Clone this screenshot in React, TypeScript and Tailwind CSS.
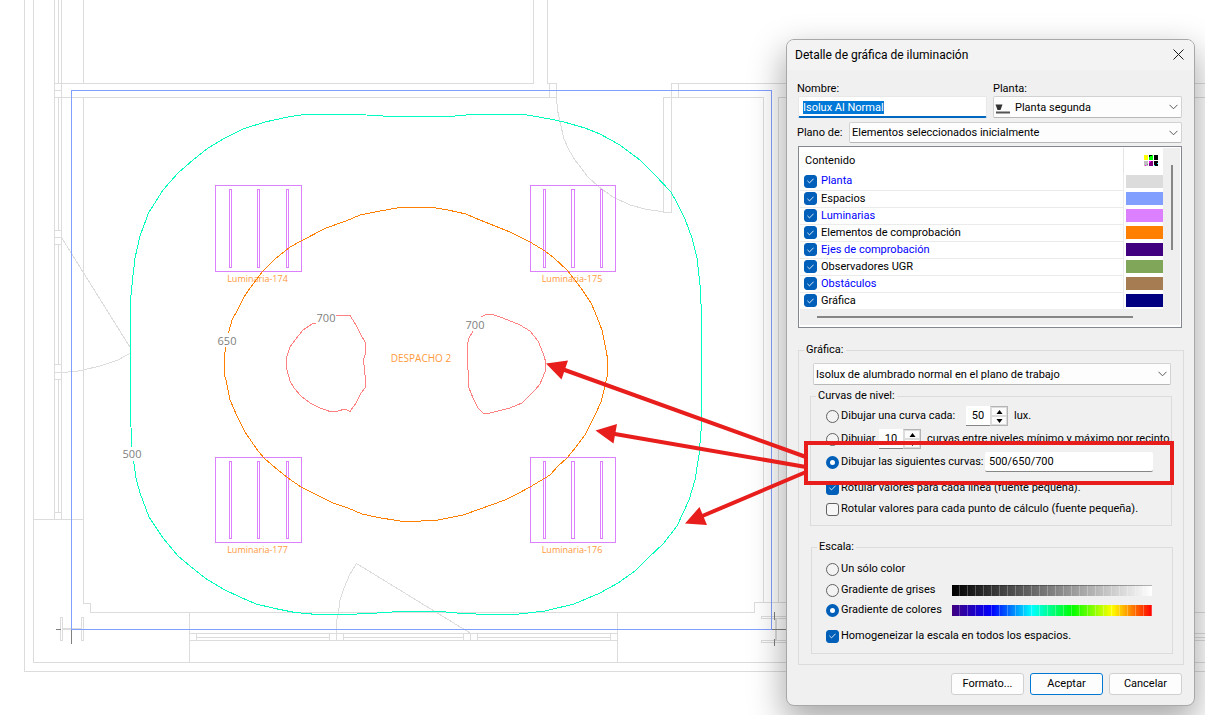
import React, { useEffect, useId, useRef } from "react";

const FONT = "font-['Roboto','Noto_Sans',sans-serif]";

/* ---------- floor plan ---------- */

const WALLS = [
  "M24.5 0V671.5H1205",
  "M33.5 0V662.5H1205",
  "M33.5 519.5H83.5",
  "M54.5 0V519.5",
  "M61.5 0V519.5",
  "M58.5 0V83.5M58.5 97.5V230.5M58.5 244.5V364.5M58.5 379.5V512.5",
  "M54.5 90.5H61.5M54.5 230.5H61.5M54.5 237.5H61.5M54.5 244.5H61.5M54.5 364.5H61.5M54.5 372.5H61.5M54.5 379.5H61.5M54.5 512.5H61.5",
  "M83.5 0V83.5M83.5 97.5V603.5H90.5V612.5H754.5V602.5H790",
  "M54.5 83.5H533.5V0",
  "M547.5 0V83.5H556.5V97.5",
  "M549.5 83.5V97.5",
  "M54.5 97.5H556.5",
  "M671.5 212.5V83.5H1205",
  "M678.5 83.5V97.5",
  "M671.5 212.5H663.5V97.5H763.5V602.5",
  "M778.5 602.5V97.5H1205",
  "M189.5 612.5V662.5M617.5 612.5V662.5",
  "M189.5 633.5H617.5M189.5 640.5H617.5",
  "M196.5 633.5V640.5M329.5 633.5V640.5M343.5 633.5V640.5M463.5 633.5V640.5M470.5 633.5V640.5M477.5 633.5V640.5M610.5 633.5V640.5",
  "M196.5 637.5H329.5M343.5 637.5H463.5M477.5 637.5H610.5",
  "M1190 612.5H1205M1190 633.5H1205M1190 637.5H1205M1190 640.5H1205",
  "M60.5 617.5H62.5V640.5H60.5ZM81.5 617.5H83.5V640.5H81.5Z",
  "M790 616.5H761.5V618.5H790M790 640.5H761.5V642.5H790",
];

const DOORS = [
  "M556.5 97L557.5 110L560 122L564 139L569 150L575 160L588 177L599 187L613 197L630 205L645 209L664 212",
  "M61.5 237.5L130.5 348V353L118 360L100 366L83 370L75 371.5L61.5 372.5",
  "M336.5 640V622L338.5 612L340 600L344 588L350 574L356.5 563.5L470 633",
];

const ISO_500 =
  "M131.5 447L131 427L130.5 415V300L132.5 280L135 258L140 236L148.5 213L163 190L178 173L193 160L208 148L225 138L243 129L265 122L290 116.5L305 114.5H358L383 116L400 116.5H450L472 114.5H523L530 115.5L550 119L564 122L585 128L600 134L620 145L640 160L655 175L671 192L677 203L685 219L692 238L697 258L700 285L701.5 313V425L699 455L695 480L689 500L677 526L663 544L648 558L635 571L618 583L600 593L574 604L545 611L515 614.5H488L463 613.5L440 611.5H400L370 613.5L345 614.5H317L295 612.5L275 608.5L256 604L240 597L223 589L205 578L190 566L178 556L163 538L149 517L140 493L136 478L133.5 461";
const ISO_650 =
  "M228.5 333L232 320L237 311L244 297L250 288L257 279L263 271L275 259L290 247L301 241L326 228L346 221L360 215L380 211L400 207.5H433L448 210L466 214L475 218L495 226L510 232L530 242L545 251L553 257L567 270L581 288L591 303L595 312L602 330L605 345L607.5 358V375L604 390L601 402L596 413L590 425L585 435L576 447L567 458L558 466L550 475L530 487L517 494L505 500L480 509L463 515L438 520L413 521.5L400 521L378 517.5L362 514L348 508L333 503L315 494L301 487L288 478L278 470L265 459L258 451L245 432L237 416L230 400L226 380L224.5 375V357L225.5 347";
const ISO_700 =
  "M336 315.5H350L356 325L360 333L366 344L365 355L363.5 360L365 375V388L361 393L356 403L350 411.5L345 409L338 411L330 411.5L320 408L310 403L301 396L294 388L290 381L287 370L286.5 358L290 347L295 340L303 330L312 324L316 323M481 317L485 315L491 314L500 317L508 320L520 325L530 331L538 341L541 348L544 356L546 363L545 372L540 384L535 390L522 403L510 408L490 413L483 413L478 408L473 398L469 388L468 370L467 350V346L469 338L473 331";

const LUMINAIRES = [
  { name: "Luminaria-174", x: 215.5, y: 185.5, w: 86, h: 86, slats: [14, 42, 71], tall: 78 },
  { name: "Luminaria-175", x: 530.5, y: 185.5, w: 85, h: 86, slats: [13, 41, 70], tall: 78 },
  { name: "Luminaria-177", x: 215.5, y: 457.5, w: 86, h: 85, slats: [14, 42, 71], tall: 77 },
  { name: "Luminaria-176", x: 530.5, y: 457.5, w: 85, h: 85, slats: [13, 41, 70], tall: 77 },
];

const LEVELS = [
  { value: "700", x: 326, y: 322 },
  { value: "700", x: 475, y: 329 },
  { value: "650", x: 227, y: 345 },
  { value: "500", x: 132, y: 458 },
];

function FloorPlan() {
  return (
    <svg
      width="1205"
      height="715"
      viewBox="0 0 1205 715"
      className="absolute top-0 left-0 font-['Open_Sans','Noto_Sans',sans-serif]"
      fill="none"
      role="img"
      aria-label="Plano con curvas isolux"
    >
      <g shapeRendering="crispEdges" stroke="#dcdcdc">
        {WALLS.map((d) => <path key={d} d={d} />)}
        {DOORS.map((d) => <path key={d} d={d} />)}
        <path d="M62 629H82M775.5 618V641" strokeWidth="2" />
      </g>
      <g shapeRendering="crispEdges" stroke="#808080">
        <path d="M56 629.5H61M71.5 629V644M771 629.5H790M774.5 612V620M774.5 639V646" />
      </g>
      <rect x="71.5" y="90.5" width="700" height="539" stroke="#809fff" shapeRendering="crispEdges" />
      <g shapeRendering="crispEdges" stroke="#dc80ff">
        {LUMINAIRES.map((l) => (
          <g key={l.name}>
            <rect x={l.x} y={l.y} width={l.w} height={l.h} />
            {l.slats.map((s, i) => (
              <rect key={s} x={l.x + s} y={l.y + 4} width={i === 1 && l.w === 85 ? 3 : 2} height={l.tall} />
            ))}
          </g>
        ))}
      </g>
      <g fill="#ff9a3c" fontSize="9" textAnchor="middle">
        {LUMINAIRES.map((l) => (
          <text key={l.name} x={l.x + l.w / 2 - 1} y={l.y + l.h + 10}>{l.name}</text>
        ))}
        <text x="421" y="362" fontSize="10">DESPACHO 2</text>
      </g>
      <g shapeRendering="crispEdges">
        <path d={ISO_500} stroke="#00ffbf" />
        <path d={ISO_650} stroke="#ff8000" />
        <path d={ISO_700} stroke="#ff8080" />
      </g>
      <g fill="#808080" fontSize="11" textAnchor="middle">
        {LEVELS.map((l) => <text key={l.value + l.x} x={l.x} y={l.y}>{l.value}</text>)}
      </g>
    </svg>
  );
}

function Callout() {
  return (
    <svg width="1205" height="715" viewBox="0 0 1205 715" fill="none" className="pointer-events-none absolute top-0 left-0" aria-hidden="true">
      <g stroke="#e81e1c" strokeWidth="4">
        <path d="M562 369L806 457M612 433.5L806 467M700 517L806 472" />
        <rect x="806" y="443" width="366" height="40" />
      </g>
      <g fill="#e81e1c">
        <path d="M546 363.5L568 360.5L561.5 379.5ZM595.5 430.5L617 424L613.5 443.5ZM685 523.5L699.5 507L707 525Z" />
      </g>
    </svg>
  );
}

/* ---------- form controls ---------- */

function Select({ id, label, value, icon, className }: { id: string; label: string; value: string; icon?: boolean; className: string }) {
  return (
    <div className={`relative flex ${className}`}>
      {icon && (
        <svg width="15" height="12" viewBox="0 0 15 12" className="pointer-events-none absolute top-2 left-0.5" aria-hidden="true">
          <path d="M0.500 0.500H7.500L5.500 6H2.500Z" fill="#333" />
          <path d="M1 8.500H15" stroke="#555" strokeWidth="2" />
        </svg>
      )}
      <select
        id={id}
        aria-label={label}
        className={`w-full appearance-none rounded-[2px] border border-[#d2d2d2] border-b-[#b8b8b8] bg-[#fdfdfd] pt-px pr-6 outline-none ${icon ? "pl-[21px]" : "pl-[2px]"}`}
      >
        <option>{value}</option>
      </select>
      <svg width="9" height="6" viewBox="0 0 9 6" fill="none" stroke="#5a5a5a" className="pointer-events-none absolute top-2 right-1" aria-hidden="true">
        <path d="M0.500 0.800L4.500 4.800L8.500 0.800" />
      </svg>
    </div>
  );
}

function Check({ id, checked = true, label }: { id: string; checked?: boolean; label?: string }) {
  return (
    <span className="grid size-[13px] shrink-0 place-items-center">
      <input
        id={id}
        type="checkbox"
        aria-label={label}
        defaultChecked={checked}
        className="peer col-start-1 row-start-1 size-[13px] appearance-none rounded-[3px] border border-[#626262] bg-[#f7f7f7] checked:border-[#005fb8] checked:bg-[#005fb8]"
      />
      <svg width="7" height="6" viewBox="0 0 7 6" fill="none" stroke="#dbe9f6" className="pointer-events-none col-start-1 row-start-1 hidden peer-checked:block" aria-hidden="true">
        <path d="M0.400 2.800L2.500 4.900L6.600 0.700" />
      </svg>
    </span>
  );
}

function Radio({ id, name, checked = false }: { id: string; name: string; checked?: boolean }) {
  return (
    <input
      id={id}
      name={name}
      type="radio"
      defaultChecked={checked}
      className="size-[13px] shrink-0 appearance-none rounded-full border border-[#626262] bg-[#f3f3f3] checked:border-4 checked:border-[#005fb8] checked:bg-white"
    />
  );
}

function Spinner({ value, label }: { value: string; label: string }) {
  return (
    <span className="flex h-5 shrink-0">
      <input aria-label={label} defaultValue={value} className="w-6 border-b border-[#868686] bg-white text-center outline-none" />
      <span className="flex w-[18px] flex-col border border-[#b4b4b4] border-l-[#dcdcdc]">
        <button aria-label={`Aumentar ${label}`} className="flex flex-1 items-center justify-center border border-[#dcdcdc] bg-[#fbfbfb]">
          <svg width="7" height="4" viewBox="0 0 7 4" aria-hidden="true"><path d="M3.500 0L6.500 4H0.500Z" /></svg>
        </button>
        <button aria-label={`Disminuir ${label}`} className="flex flex-1 items-center justify-center border border-[#dcdcdc] bg-[#fbfbfb]">
          <svg width="7" height="4" viewBox="0 0 7 4" aria-hidden="true"><path d="M0.500 0H6.500L3.500 4Z" /></svg>
        </button>
      </span>
    </span>
  );
}

const LAYERS = [
  { name: "Planta", text: "text-[#0000ff]", swatch: "bg-[#dcdcdc]" },
  { name: "Espacios", text: "text-black", swatch: "bg-[#809fff]" },
  { name: "Luminarias", text: "text-[#0000ff]", swatch: "bg-[#dc80ff]" },
  { name: "Elementos de comprobación", text: "text-black", swatch: "bg-[#ff8000]" },
  { name: "Ejes de comprobación", text: "text-[#0000ff]", swatch: "bg-[#400080]" },
  { name: "Observadores UGR", text: "text-black", swatch: "bg-[#80a659]" },
  { name: "Obstáculos", text: "text-[#0000ff]", swatch: "bg-[#a67c53]" },
  { name: "Gráfica", text: "text-black", swatch: "bg-[#000080]" },
];

function PaletteIcon() {
  return (
    <svg width="14" height="11" viewBox="0 0 14 11" shapeRendering="crispEdges" aria-hidden="true">
      <path d="M0 0H4V5H0Z" fill="#ff0" />
      <path d="M5 0H9V5H5Z" fill="#0f0" />
      <path d="M10 0H14V5H10ZM5 0H8V1H6V2H5ZM10 6H14V11H10Z" fill="#000" />
      <path d="M0 6H4V11H0Z" fill="#c0c0c0" />
      <path d="M5 6H9V11H5Z" fill="#800080" />
      <path d="M5 6H7V7H6V8H5ZM1 10H2V11H1Z" fill="#f0f" />
      <path d="M13 8H14V9H13ZM10 10H11V11H10Z" fill="#0ff" />
      <path d="M3 9H4V10H3Z" fill="#808080" />
    </svg>
  );
}

function LayerList() {
  const id = useId();
  return (
    <div className="mt-[3px] flex h-[182px] flex-col border border-[#828790] bg-white p-px pb-0.5">
      <div className="flex min-h-0 flex-1">
        <table className="min-w-0 flex-1 border-collapse">
          <thead>
            <tr className="h-[25px]">
              <th className="border-r border-[#e5e5e5] p-0 pl-[5px] text-left font-normal">Contenido</th>
              <th className="w-10 p-0 pl-[20px]"><PaletteIcon /></th>
            </tr>
          </thead>
          <tbody>
            {LAYERS.map((l, i) => (
              <tr key={l.name} className="h-[17px]">
                <td className="border-r border-b border-[#ebebeb] p-0 pl-1">
                  <label htmlFor={id + i} className={`flex h-4 items-center gap-1 ${l.text}`}>
                    <Check id={id + i} />
                    {l.name}
                  </label>
                </td>
                <td className="p-0 pl-0.5"><div className={`h-[13px] ${l.swatch}`} /></td>
              </tr>
            ))}
          </tbody>
        </table>
        <div className="flex w-[17px] shrink-0 justify-center bg-[#efefef] pt-[17px]">
          <div className="h-[85px] w-0.5 bg-[#868686]" />
        </div>
      </div>
      <div className="h-4 bg-[#efefef] pt-[7px] pr-[47px] pl-[17px]">
        <div className="h-0.5 bg-[#868686]" />
      </div>
    </div>
  );
}

function Group({ title, className, children }: { title: string; className: string; children: React.ReactNode }) {
  return (
    <fieldset className={`min-w-0 border border-[#dcdcdc] ${className}`}>
      <legend className="ml-[5px] px-0.5">{title}</legend>
      {children}
    </fieldset>
  );
}

/* ---------- dialog ---------- */

function LightingDialog() {
  const nameRef = useRef<HTMLInputElement>(null);
  useEffect(() => {
    nameRef.current?.focus();
    nameRef.current?.select();
  }, []);
  return (
    <section
      role="dialog"
      aria-labelledby="dlg-title"
      className={`absolute top-[39px] left-[786px] w-[409px] overflow-hidden rounded-lg border border-[#a8a8a8] bg-[#f0f0f0] text-[11px]/[14px] whitespace-nowrap text-black shadow-[0_14px_34px_2px_rgba(0,0,0,0.34)] ${FONT}`}
    >
      <header className="flex h-[30px] items-center justify-between bg-[#f3f3f3] pr-2.5 pl-2">
        <h1 id="dlg-title" className="text-[12px]/[16px]">Detalle de gráfica de iluminación</h1>
        <button aria-label="Cerrar" className="pb-0.5">
          <svg width="11" height="11" viewBox="0 0 11 11" stroke="#1a1a1a" aria-hidden="true"><path d="M0.500 0.500L10.500 10.500M10.500 0.500L0.500 10.500" /></svg>
        </button>
      </header>

      <div className="pt-3 pr-3 pb-2.5 pl-[11px]">
        <div className="grid grid-cols-2 gap-x-1.5">
          <div className="flex flex-col">
            <label htmlFor="nombre" className="-ml-px">Nombre:</label>
            <input
              id="nombre"
              ref={nameRef}
              defaultValue="Isolux Al Normal"
              className="h-[22px] rounded-[2px] border border-[#e8e8e8] border-b-2 border-b-[#0067c0] bg-white px-1 pt-0.5 outline-none selection:bg-[#0078d7] selection:text-white"
            />
          </div>
          <div className="flex flex-col">
            <label htmlFor="planta">Planta:</label>
            <Select id="planta" label="Planta" value="Planta segunda" icon className="h-[22px]" />
          </div>
        </div>

        <div className="mt-1 flex items-center gap-1.5">
          <label htmlFor="plano" className="-ml-px w-[46px]">Plano de:</label>
          <Select id="plano" label="Plano de" value="Elementos seleccionados inicialmente" className="h-[21px] flex-1" />
        </div>

        <LayerList />

        <Group title="Gráfica:" className="-mr-0.5 mt-[15px] pb-2.5">
          <Select id="grafica" label="Gráfica" value="Isolux de alumbrado normal en el plano de trabajo" className="mt-1.5 mr-3 ml-3.5 h-[22px]" />

          <Group title="Curvas de nivel:" className="mt-1 mr-[11px] ml-[11px] h-[137px]">
            <div className="pl-[15px]">
              <div className="flex h-[26px] items-center gap-2">
                <label htmlFor="c1" className="flex w-[132px] items-center gap-0.5">
                  <Radio id="c1" name="curvas" />Dibujar una curva cada:
                </label>
                <Spinner value="50" label="lux entre curvas" />
                <span className="-ml-0.5">lux.</span>
              </div>
              <div className="flex h-5 items-center gap-1.5">
                <label htmlFor="c2" className="flex w-[47px] items-center gap-0.5">
                  <Radio id="c2" name="curvas" />Dibujar
                </label>
                <Spinner value="10" label="número de curvas" />
                <span>curvas entre niveles mínimo y máximo por recinto.</span>
              </div>
              <div className="flex h-[26px] items-center gap-1">
                <label htmlFor="c3" className="flex w-[155px] items-center gap-0.5">
                  <Radio id="c3" name="curvas" checked />Dibujar las siguientes curvas:
                </label>
                <input aria-label="Valores de las curvas" defaultValue="500/650/700" className="h-5 w-[168px] rounded-[2px] border-b border-[#868686] bg-white px-1 outline-none" />
              </div>
              <label htmlFor="r1" className="flex h-[26px] items-center gap-0.5">
                <Check id="r1" />Rotular valores para cada línea (fuente pequeña).
              </label>
              <label htmlFor="r2" className="flex h-4 items-center gap-0.5">
                <Check id="r2" checked={false} />Rotular valores para cada punto de cálculo (fuente pequeña).
              </label>
            </div>
          </Group>

          <Group title="Escala:" className="mt-3.5 mr-2.5 ml-3 h-[114px]">
            <div className="pt-1 pl-3.5">
              <label htmlFor="e1" className="flex h-[22px] items-center gap-0.5">
                <Radio id="e1" name="escala" />Un sólo color
              </label>
              <div className="flex h-5 items-center">
                <label htmlFor="e2" className="flex w-[126px] items-center gap-0.5">
                  <Radio id="e2" name="escala" />Gradiente de grises
                </label>
                <div className="h-[11px] w-[200px] border-t border-[#0000004d] bg-[repeating-linear-gradient(90deg,transparent_0_7px,#ffffff40_7px_8px),linear-gradient(90deg,#000,#fff)]" />
              </div>
              <div className="flex h-5 items-center">
                <label htmlFor="e3" className="flex w-[126px] items-center gap-0.5">
                  <Radio id="e3" name="escala" checked />Gradiente de colores
                </label>
                <div className="h-[11px] w-[200px] bg-[repeating-linear-gradient(90deg,transparent_0_7px,#ffffff40_7px_8px),linear-gradient(90deg,#400080,#0000ff_20%,#00ffff_40%,#00ff00_60%,#ffff00_80%,#ff0000)]" />
              </div>
              <label htmlFor="e4" className="mt-1 flex h-6 items-center gap-0.5">
                <Check id="e4" />Homogeneizar la escala en todos los espacios.
              </label>
            </div>
          </Group>
        </Group>

        <footer className="mt-2 flex justify-end gap-1.5">
          <button className="h-[22px] w-[73px] rounded-[3px] border border-[#d0d0d0] bg-[#fdfdfd]">Formato...</button>
          <button className="h-[22px] w-[73px] rounded-[3px] border border-[#0078d4] bg-[#fdfdfd]">Aceptar</button>
          <button className="h-[22px] w-[73px] rounded-[3px] border border-[#d0d0d0] bg-[#fdfdfd]">Cancelar</button>
        </footer>
      </div>
    </section>
  );
}

export default function App() {
  return (
    <main className="relative h-screen overflow-hidden bg-white">
      <FloorPlan />
      <LightingDialog />
      <Callout />
    </main>
  );
}
